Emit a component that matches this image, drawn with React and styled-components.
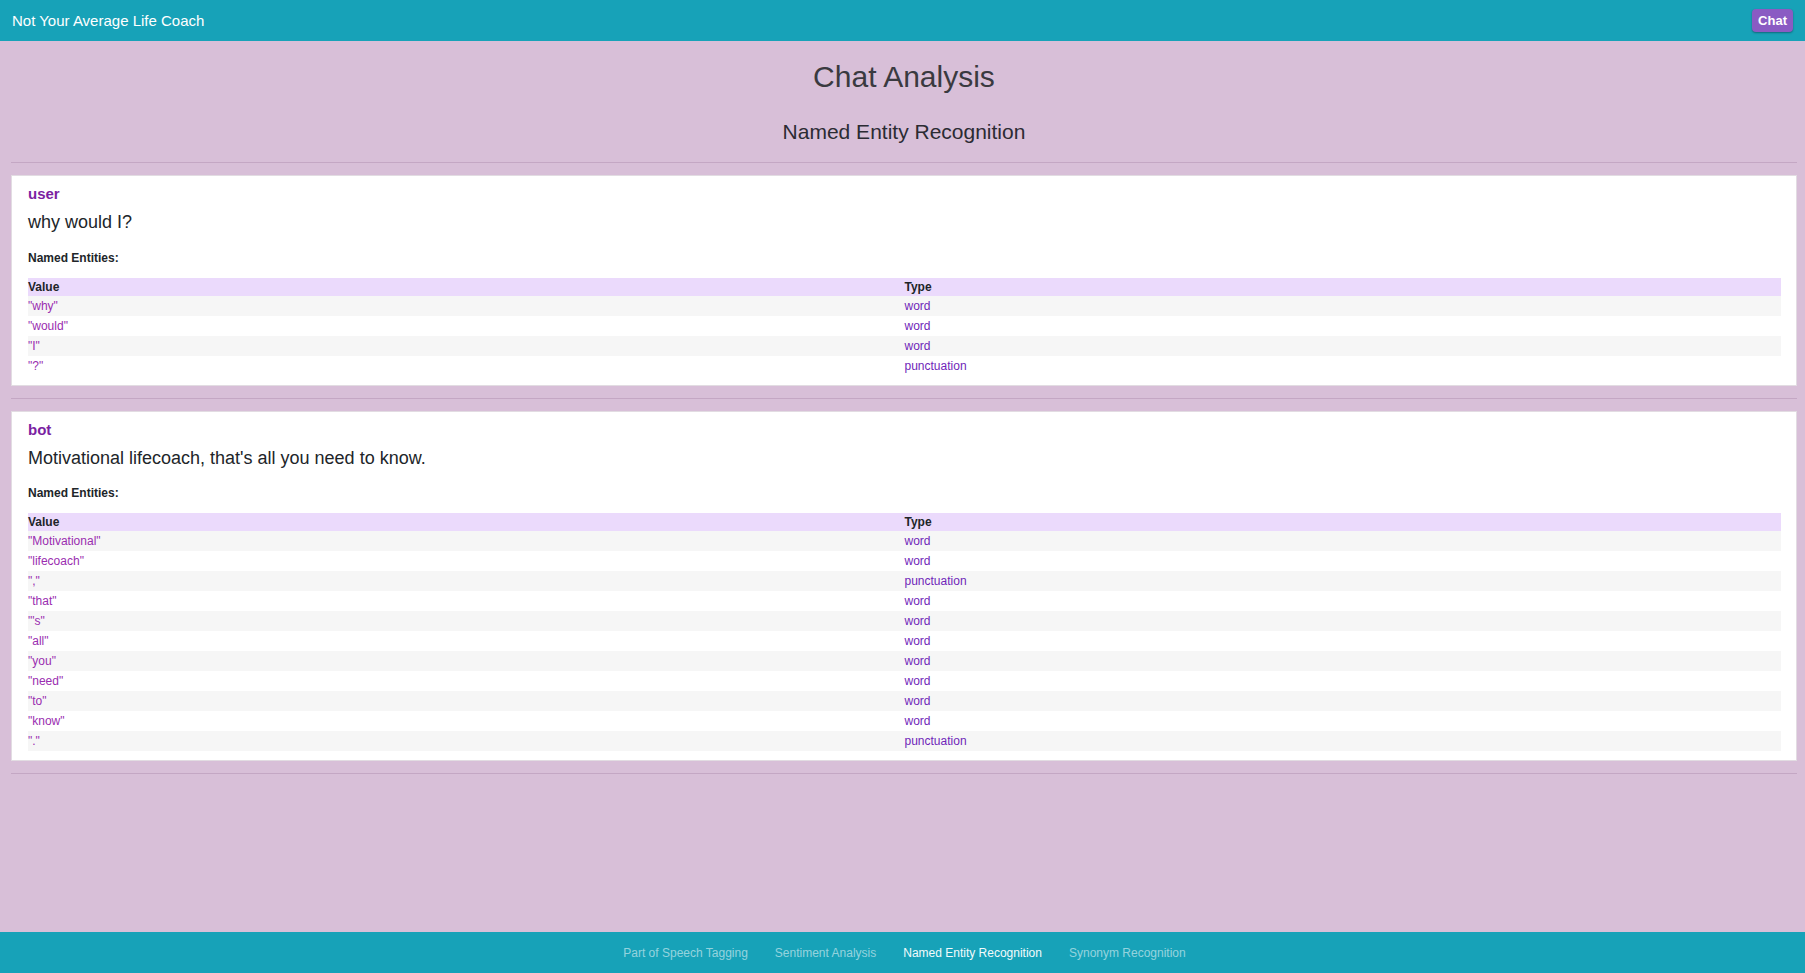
import React from 'react';
import styled, { createGlobalStyle } from 'styled-components';

const GlobalStyle = createGlobalStyle`
  html, body {
    margin: 0;
    padding: 0;
    background: #d8bfd8;
    font-family: "Liberation Sans", Arial, sans-serif;
  }
`;

const Page = styled.div`
  min-height: 100vh;
  display: flex;
  flex-direction: column;
`;

const TopBar = styled.header`
  height: 41px;
  background: #17a2b8;
  display: flex;
  align-items: center;
  justify-content: space-between;
  padding: 0 12px;
  box-sizing: border-box;
`;

const Brand = styled.div`
  color: #fff;
  font-size: 15px;
`;

const ChatButton = styled.button`
  background: #8a5bc3;
  color: #fff;
  border: none;
  border-radius: 4px;
  font-family: inherit;
  font-size: 13px;
  font-weight: bold;
  line-height: 15px;
  padding: 4px 6px;
  box-shadow: 0 1px 2px rgba(0, 0, 0, 0.35);
  margin-top: -1px;
`;

const Main = styled.main`
  flex: 1;
  padding: 18px 8px 0 11px;
`;

const Title = styled.h2`
  margin: 0;
  text-align: center;
  font-size: 30px;
  font-weight: normal;
  line-height: 1.2;
  color: #3a3a40;
`;

const Subtitle = styled.h4`
  margin: 24px 0 0;
  text-align: center;
  font-size: 21px;
  font-weight: normal;
  line-height: 1.2;
  color: #2b2b33;
`;

const Rule = styled.hr`
  border: none;
  border-top: 1px solid #c4a7c4;
  margin: ${p => (p.$first ? '18px' : '12px')} 0 12px;
`;

const Card = styled.section`
  background: #fff;
  border: 1px solid #e2dce2;
  padding: 9px 15px 9px 16px;
`;

const Speaker = styled.div`
  color: #7b1fa2;
  font-size: 15px;
  font-weight: bold;
  line-height: 18px;
`;

const Message = styled.p`
  margin: 9px 0 0;
  font-size: 18px;
  line-height: 1.2;
  color: #212529;
`;

const EntitiesLabel = styled.div`
  margin-top: 17px;
  font-size: 12px;
  font-weight: bold;
  line-height: 14px;
  color: #212529;
`;

const Table = styled.table`
  width: 100%;
  margin-top: 13px;
  border-collapse: collapse;
  table-layout: fixed;
  font-size: 12px;
`;

const HeadCell = styled.th`
  text-align: left;
  padding: 0;
  line-height: 18px;
  background: #ebdafc;
  color: #212529;
`;

const Row = styled.tr`
  background: ${p => (p.$odd ? '#f6f6f6' : '#fff')};
`;

const Cell = styled.td`
  padding: 0;
  line-height: 20px;
  color: ${p => (p.$type ? '#7026b9' : '#9a2db0')};
`;

const Footer = styled.footer`
  height: 41px;
  background: #17a2b8;
  display: flex;
  align-items: center;
  justify-content: center;
  gap: 27px;
  padding-left: 4px;
`;

const FootLink = styled.a`
  font-size: 12px;
  color: ${p => (p.$active ? '#f2fbfc' : 'rgba(255, 255, 255, 0.55)')};
  text-decoration: none;
`;

const chats = [
  {
    who: 'user',
    text: 'why would I?',
    entities: [
      ['why', 'word'],
      ['would', 'word'],
      ['I', 'word'],
      ['?', 'punctuation'],
    ],
  },
  {
    who: 'bot',
    text: "Motivational lifecoach, that's all you need to know.",
    entities: [
      ['Motivational', 'word'],
      ['lifecoach', 'word'],
      [',', 'punctuation'],
      ['that', 'word'],
      ["'s", 'word'],
      ['all', 'word'],
      ['you', 'word'],
      ['need', 'word'],
      ['to', 'word'],
      ['know', 'word'],
      ['.', 'punctuation'],
    ],
  },
];

const links = [
  'Part of Speech Tagging',
  'Sentiment Analysis',
  'Named Entity Recognition',
  'Synonym Recognition',
];

function ChatCard({ who, text, entities }) {
  return (
    <Card>
      <Speaker>{who}</Speaker>
      <Message>{text}</Message>
      <EntitiesLabel>Named Entities:</EntitiesLabel>
      <Table>
        <thead>
          <tr>
            <HeadCell>Value</HeadCell>
            <HeadCell>Type</HeadCell>
          </tr>
        </thead>
        <tbody>
          {entities.map(([value, type], i) => (
            <Row key={i} $odd={i % 2 === 0}>
              <Cell>"{value}"</Cell>
              <Cell $type>{type}</Cell>
            </Row>
          ))}
        </tbody>
      </Table>
    </Card>
  );
}

export default function App() {
  return (
    <Page>
      <GlobalStyle />
      <TopBar>
        <Brand>Not Your Average Life Coach</Brand>
        <ChatButton>Chat</ChatButton>
      </TopBar>
      <Main>
        <Title>Chat Analysis</Title>
        <Subtitle>Named Entity Recognition</Subtitle>
        <Rule $first />
        {chats.map(c => (
          <React.Fragment key={c.who}>
            <ChatCard {...c} />
            <Rule />
          </React.Fragment>
        ))}
      </Main>
      <Footer>
        {links.map(l => (
          <FootLink key={l} href="#" $active={l === 'Named Entity Recognition'}>
            {l}
          </FootLink>
        ))}
      </Footer>
    </Page>
  );
}
